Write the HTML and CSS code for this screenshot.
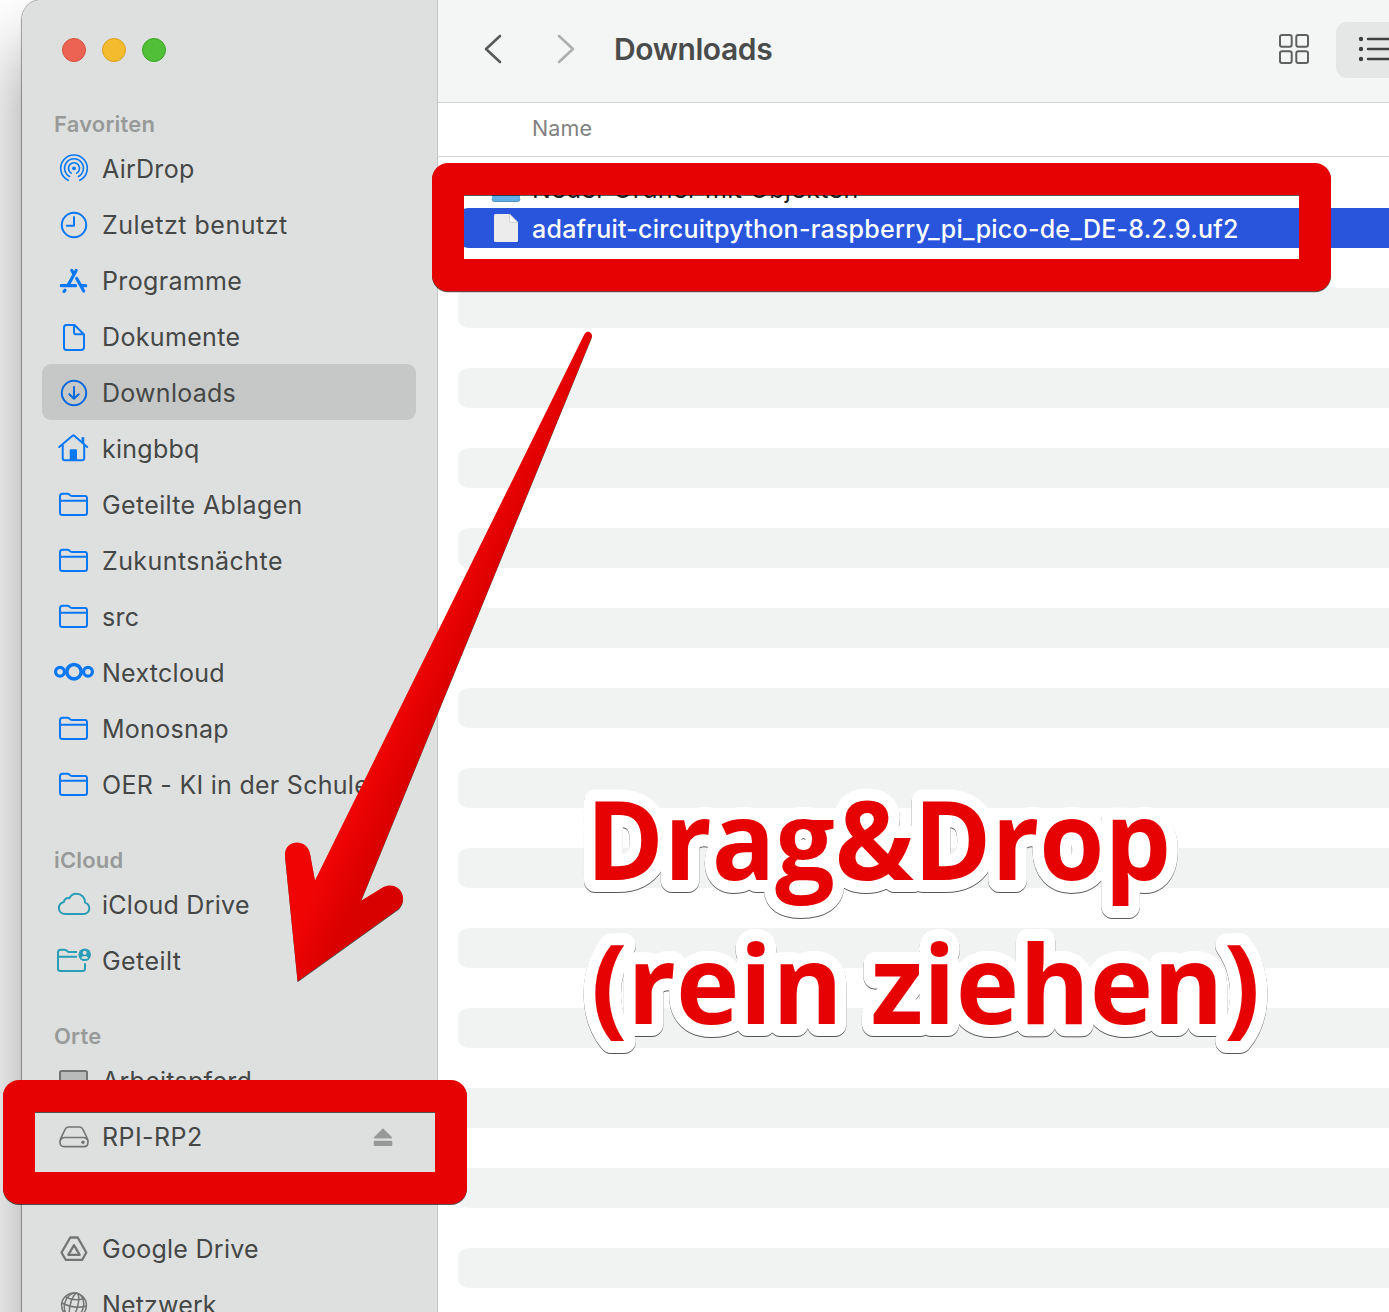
FILE: index.html
```html
<!DOCTYPE html>
<html lang="de">
<head>
<meta charset="utf-8">
<title>Downloads</title>
<link rel="stylesheet" href="styles.css">
</head>
<body>
<svg class="defs" width="0" height="0" aria-hidden="true">
  <symbol id="folder" viewBox="0 0 40 40"><path d="M6 28.500V12.200Q6 9.700 8.500 9.700H13.200Q14.600 9.700 15.600 10.800T18.200 12.100H30.800Q33 12.100 33 14.500V28.700Q33 31 30.700 31H8.400Q6 31 6 28.500ZM6 16.700H33"/></symbol>
</svg>
<div class="desktop">
  <div class="window">
    <aside class="sidebar">
      <div class="lights"><span class="light red"></span><span class="light yellow"></span><span class="light green"></span></div>
      <h2 class="group">Favoriten</h2>
      <ul class="places">
        <li class="place"><svg class="icon" viewBox="0 0 40 40"><path d="M14.200 32.300A13.300 13.300 0 1 1 25.800 32.300M15.600 28.500A9.400 9.400 0 1 1 24.400 28.500M17.300 25.100A5.500 5.500 0 1 1 22.700 25.100" stroke-width="1.600"/><circle cx="20" cy="20.300" r="1.900" class="solid"/></svg><span class="t-airdrop">AirDrop</span></li>
        <li class="place"><svg class="icon" viewBox="0 0 40 40"><circle cx="20" cy="21" r="12.200"/><path d="M20 13V21.700H12.800"/></svg><span class="t-recent">Zuletzt benutzt</span></li>
        <li class="place"><svg class="icon" viewBox="0 0 40 40"><path d="M22.200 10.500 14.200 25M17.800 10.500 19.700 13.700M22.700 18.500 29.700 31M7.300 25.700H21.600M27.800 25.700H31.700M11 30.200 10 31.500" stroke-width="3.200"/></svg><span class="t-apps">Programme</span></li>
        <li class="place"><svg class="icon" viewBox="0 0 40 40"><path d="M12.500 9H20.500L30 18.500V31.300Q30 34 27.300 34H12.500Q10 34 10 31.300V11.700Q10 9 12.500 9ZM20 9V16.200Q20 18.300 22.200 18.300H30"/></svg><span class="t-docs">Dokumente</span></li>
        <li class="place selected"><svg class="icon" viewBox="0 0 40 40"><circle cx="20" cy="21" r="12.200"/><path d="M20 15V26.500M15.300 22.300 20 26.800 24.700 22.300"/></svg><span class="t-down">Downloads</span></li>
        <li class="place"><svg class="icon" viewBox="0 0 40 40"><path d="M5.200 19 18.500 7.700Q19.400 7 20.300 7.700L33.200 19M8.700 16.500V30Q8.700 32.300 11 32.300H28Q30.200 32.300 30.200 30V16.500"/><path d="M15.700 32.500V22.300Q15.700 21.300 16.700 21.300H22Q23 21.300 23 22.300V32.500ZM27.500 14V9.200H30.300V16.500Z" class="solid"/></svg><span class="t-home">kingbbq</span></li>
        <li class="place"><svg class="icon"><use href="#folder"/></svg><span class="t-shared">Geteilte Ablagen</span></li>
        <li class="place"><svg class="icon"><use href="#folder"/></svg><span class="t-zuk">Zukuntsnächte</span></li>
        <li class="place"><svg class="icon"><use href="#folder"/></svg><span class="t-src">src</span></li>
        <li class="place"><svg class="icon" viewBox="0 0 40 40"><circle cx="20" cy="19.700" r="7.200" stroke-width="3.600"/><circle cx="6" cy="19.700" r="4.400" stroke-width="3.200"/><circle cx="34" cy="19.700" r="4.400" stroke-width="3.200"/></svg><span class="t-next">Nextcloud</span></li>
        <li class="place"><svg class="icon"><use href="#folder"/></svg><span class="t-mono">Monosnap</span></li>
        <li class="place"><svg class="icon"><use href="#folder"/></svg><span class="t-oer">OER - KI in der Schule</span></li>
      </ul>
      <h2 class="group">iCloud</h2>
      <ul class="places teal">
        <li class="place"><svg class="icon" viewBox="0 0 40 40"><path d="M11.300 30C7.500 30 4.900 27.400 4.900 24.200 4.900 21 7 18.700 9.900 18 10 15.500 12.500 13.500 15.300 14.300 16.800 11.300 19.300 9.700 22.300 9.700 27.500 9.700 31 13.500 31 18.600 33.800 19.500 35.300 21.800 35.300 24.400 35.300 27.600 32.700 30 29.500 30Z"/></svg><span class="t-icloud">iCloud Drive</span></li>
        <li class="place"><svg class="icon" viewBox="0 0 40 40"><path d="M23 12.100H15.400Q14 12.100 13 10.900T10.500 9.700H6.500Q4 9.700 4 12.200V28.500Q4 31 6.500 31H28.500Q31 31 31 28.500V23.300M4 16.700H23" stroke-linecap="butt"/><circle cx="30.700" cy="14.800" r="6.300" class="solid"/><circle cx="30.700" cy="12.700" r="2" class="cut"/><path d="M27 18.300Q28 16 30.700 16T34.400 18.300Q30.700 19.500 27 18.300Z" class="cut"/></svg><span class="t-geteilt">Geteilt</span></li>
      </ul>
      <h2 class="group">Orte</h2>
      <ul class="places gray">
        <li class="place"><svg class="icon" viewBox="0 0 40 40"><rect x="6" y="11" width="27" height="19" rx="1.500" class="screen"/></svg><span class="t-arb">Arbeitspferd</span></li>
        <li class="place"><svg class="icon" viewBox="0 0 40 40"><path d="M14.200 11H25.700Q27.800 11 28.700 13L33.300 22.500Q34 24 34 26 34 30.700 29.800 30.700H10.200Q6 30.700 6 26 6 24 6.700 22.500L11.300 13Q12.200 11 14.200 11ZM6.800 23.500Q8 21.500 10.500 21.500H29.500Q32 21.500 33.200 23.500" stroke-width="1.700"/><circle cx="29" cy="26.300" r="1.700" class="solid"/></svg><span class="t-rpi">RPI-RP2</span><svg class="eject" viewBox="0 0 20 20"><path d="M10 1.200 19 10.300Q19.200 11.500 18 11.500H2Q.8 11.500 1 10.300ZM2 13.700H18Q19.300 13.700 19.300 15V17.700Q19.300 19 18 19H2Q.7 19 .7 17.700V15Q.7 13.700 2 13.700Z"/></svg></li>
        <li class="place"></li>
        <li class="place"><svg class="icon" viewBox="0 0 40 40"><path d="M16.300 9.500H23.700L32.300 24.500 28.300 31.800H11.700L7.500 24.500ZM20 17.200 25.700 26.800H14.300Z" stroke-width="2.300"/></svg><span class="t-google">Google Drive</span></li>
        <li class="place"><svg class="icon" viewBox="0 0 40 40"><g stroke-width="1.500"><circle cx="20" cy="21.300" r="12.400"/><ellipse cx="20" cy="21.300" rx="9.500" ry="12.400" transform="rotate(14 20 21.300)"/><ellipse cx="20" cy="21.300" rx="3.800" ry="12.400" transform="rotate(14 20 21.300)"/><path d="M11.500 12.800Q19 17.500 29.500 14.800M8 19Q19 25 32.300 22.300M9.500 27.500Q18 32 28.500 30"/></g></svg><span class="t-net">Netzwerk</span></li>
      </ul>
    </aside>
    <main class="content">
      <header class="toolbar">
        <svg class="chevron back" viewBox="0 0 20 30"><path d="M17 2 3 15 17 28"/></svg>
        <svg class="chevron forward" viewBox="0 0 20 30"><path d="M3 2 17 15 3 28"/></svg>
        <h1 class="title">Downloads</h1>
        <svg class="grid-icon" viewBox="0 0 32 32"><g><rect x="2" y="2" width="11.700" height="11.700" rx="2"/><rect x="18.300" y="2" width="11.700" height="11.700" rx="2"/><rect x="2" y="18.300" width="11.700" height="11.700" rx="2"/><rect x="18.300" y="18.300" width="11.700" height="11.700" rx="2"/></g></svg>
        <div class="list-button"><svg class="list-icon" viewBox="0 0 32 28"><path d="M10 4H34M10 14H34M10 24H34"/><circle cx="3" cy="4" r="2.200"/><circle cx="3" cy="14" r="2.200"/><circle cx="3" cy="24" r="2.200"/></svg></div>
      </header>
      <div class="columns"><span>Name</span></div>
      <div class="rows">
        <div class="row"><svg class="file-icon" viewBox="0 0 32 40"><path d="M2 8Q2 6 4 6H12L15 9H28Q30 9 30 11V31Q30 33.500 27.500 33.500H4.500Q2 33.500 2 31Z" fill="#62afe6"/><path d="M2 31Q2 33.500 4.500 33.500H27.500Q30 33.500 30 31" fill="none" stroke="#4c93c4"/></svg><span class="t-ordner">Neuer Ordner mit Objekten</span></div>
        <div class="row picked"><svg class="file-icon" viewBox="0 0 32 40"><path d="M5.500 6H19.500L28 14.500V32.500Q28 34 26.500 34H5.500Q4 34 4 32.500V7.500Q4 6 5.500 6Z" fill="#ececec"/><path d="M19.500 6V12.800Q19.500 14.500 21.200 14.500H28Z" fill="#fff" stroke="#c8c8c8" stroke-width=".8"/></svg><span class="t-file">adafruit-circuitpython-raspberry_pi_pico-de_DE-8.2.9.uf2</span></div>
        <div class="row"></div><div class="row"></div><div class="row"></div><div class="row"></div><div class="row"></div><div class="row"></div><div class="row"></div><div class="row"></div><div class="row"></div><div class="row"></div><div class="row"></div><div class="row"></div><div class="row"></div><div class="row"></div><div class="row"></div><div class="row"></div><div class="row"></div><div class="row"></div><div class="row"></div><div class="row"></div><div class="row"></div><div class="row"></div><div class="row"></div><div class="row"></div><div class="row"></div><div class="row"></div><div class="row"></div>
      </div>
    </main>
  </div>
  <svg class="annotations" viewBox="0 0 1389 1312">
    <defs>
      <linearGradient id="shaft" gradientUnits="userSpaceOnUse" x1="319" y1="882" x2="357" y2="899"><stop offset="0" stop-color="#f00404"/><stop offset="1" stop-color="#d90000"/></linearGradient>
    </defs>
    <g class="marks">
      <path class="frame" fill-rule="evenodd" d="M448 163H1315A16 16 0 0 1 1331 179V275.300A16 16 0 0 1 1315 291.300H448A16 16 0 0 1 432 275.300V179A16 16 0 0 1 448 163ZM464 195V259H1299V195Z"/>
      <path class="frame" fill-rule="evenodd" d="M19 1080H451A16 16 0 0 1 467 1096V1188A16 16 0 0 1 451 1204H19A16 16 0 0 1 3 1188V1096A16 16 0 0 1 19 1080ZM35 1112V1172H435V1112Z"/>
      <path fill="url(#shaft)" d="M584.500 334Q586.500 331.300 589.500 332 593 333.500 591.600 337.500L361 900.800 383 887.300C397 880 410 896 399 908.500L297.600 981.300 285 856C284 839 307 838 310 853.500L315 880.500Z"/>
      <g class="caption">
        <text x="586" y="880" textLength="585" lengthAdjust="spacingAndGlyphs">Drag&amp;Drop</text>
        <text x="591" y="1024" textLength="669" lengthAdjust="spacingAndGlyphs">(rein ziehen)</text>
      </g>
    </g>
  </svg>
</div>
</body>
</html>
```
FILE: styles.css
```css
* { box-sizing: border-box; }
body { margin: 0; font-family: Inter, "Liberation Sans", sans-serif; overflow: hidden; }
.defs { display: block; position: absolute; }
h1, h2, ul { margin: 0; padding: 0; }
ul { list-style: none; }

.desktop { position: relative; width: 1389px; height: 1312px; overflow: hidden; padding-left: 22px; background: #fff; }
.window { display: flex; height: 1340px; border-top-left-radius: 20px; box-shadow: 0 0 1px 1px rgba(0,0,0,.35), 0 50px 70px 6px rgba(0,0,0,.36); }

.sidebar { width: 416px; flex: none; background: #dee0df; border-right: 1px solid #c4c6c5; border-top-left-radius: 20px; }
.lights { display: flex; gap: 16px; height: 76px; padding: 38px 0 0 40px; }
.light { width: 24px; height: 24px; border-radius: 50%; border: 1px solid; }
.light.red { background: #ed6353; border-color: #d5503f; }
.light.yellow { background: #f5bb2f; border-color: #d9a01e; }
.light.green { background: #51c038; border-color: #3aa524; }

.group { height: 64px; padding: 32px 0 0 32px; line-height: 33px; font-size: 22px; font-weight: 600; color: #989a99; letter-spacing: .18px; }
.place { display: flex; align-items: center; gap: 8px; height: 56px; margin: 0 21px 0 20px; padding-left: 12px; border-radius: 9px; font-size: 25px; line-height: 30px; letter-spacing: .27px; color: #454746; white-space: nowrap; }
.place span { padding-top: 2px; }
.place.selected { background: #c6c8c7; }
.t-recent { letter-spacing: .52px; }
.t-apps, .t-docs, .t-shared { letter-spacing: .35px; }
.t-zuk, .t-geteilt, .t-rpi { letter-spacing: .43px; }
.t-net { letter-spacing: .15px; }
.icon { width: 40px; height: 40px; flex: none; fill: none; stroke: #0a78f5; stroke-width: 2; stroke-linecap: round; stroke-linejoin: round; color: #0a78f5; }
.selected .icon { stroke: #0668dc; }
.teal .icon { stroke: #2a9db6; color: #2a9db6; }
.gray .icon { stroke: #737574; color: #737574; }
.solid { fill: currentColor; stroke: none; }
.cut { fill: #dee0df; stroke: none; }
.screen { fill: #b9bbba; }
.eject { width: 20px; height: 20px; margin: 2px 23px 0 auto; fill: #979998; }

.content { flex: 1; min-width: 0; background: #fff; }
.toolbar { display: flex; align-items: center; height: 103px; padding: 0 0 4px 45px; background: #f4f6f5; border-bottom: 1px solid #d2d4d3; }
.chevron { width: 20px; height: 30px; flex: none; fill: none; stroke-width: 2.6; stroke-linecap: round; stroke-linejoin: round; }
.back { stroke: #585a59; }
.forward { stroke: #adafae; margin-left: 53px; }
.title { margin-left: 38px; font-size: 30px; line-height: 36px; font-weight: 600; color: #4a4c4b; letter-spacing: -.4px; }
.grid-icon { width: 32px; height: 32px; margin-left: auto; fill: none; stroke: #5f6160; stroke-width: 2; }
.list-button { display: flex; align-items: flex-start; width: 53px; height: 56px; margin: 2px 0 0 26px; padding: 13px 0 0 22px; background: #e5e7e6; border-radius: 11px 0 0 11px; overflow: hidden; }
.list-icon { width: 32px; height: 28px; flex: none; fill: #3f4140; }
.list-icon path { stroke: #3f4140; stroke-width: 2.4; stroke-linecap: round; }
.columns { height: 54px; padding-left: 94px; line-height: 50px; font-size: 21.500px; letter-spacing: .1px; color: #808281; border-bottom: 1px solid #d4d6d5; }

.rows { padding: 11px 0 0 20px; }
.row { display: flex; align-items: center; gap: 10px; height: 40px; padding-left: 32px; border-radius: 10px 0 0 10px; font-size: 25px; line-height: 30px; letter-spacing: .36px; color: #222; white-space: nowrap; }
.row span { padding-top: 2px; }
.row:nth-child(even) { background: #f1f3f2; }
.row.picked { background: #2955dd; color: #fff; font-weight: 500; letter-spacing: .24px; }
.file-icon { width: 32px; height: 40px; flex: none; }

.annotations { position: absolute; left: 0; top: 0; width: 1389px; height: 1312px; }
.marks { filter: drop-shadow(0 1px .3px rgba(0,0,0,.65)); }
.frame { fill: #e60202; }
.caption { font-family: "Open Sans", "Noto Sans", sans-serif; font-weight: 700; font-size: 110px; fill: #e60202; stroke: #fff; stroke-width: 24px; stroke-linejoin: round; paint-order: stroke; }
```
